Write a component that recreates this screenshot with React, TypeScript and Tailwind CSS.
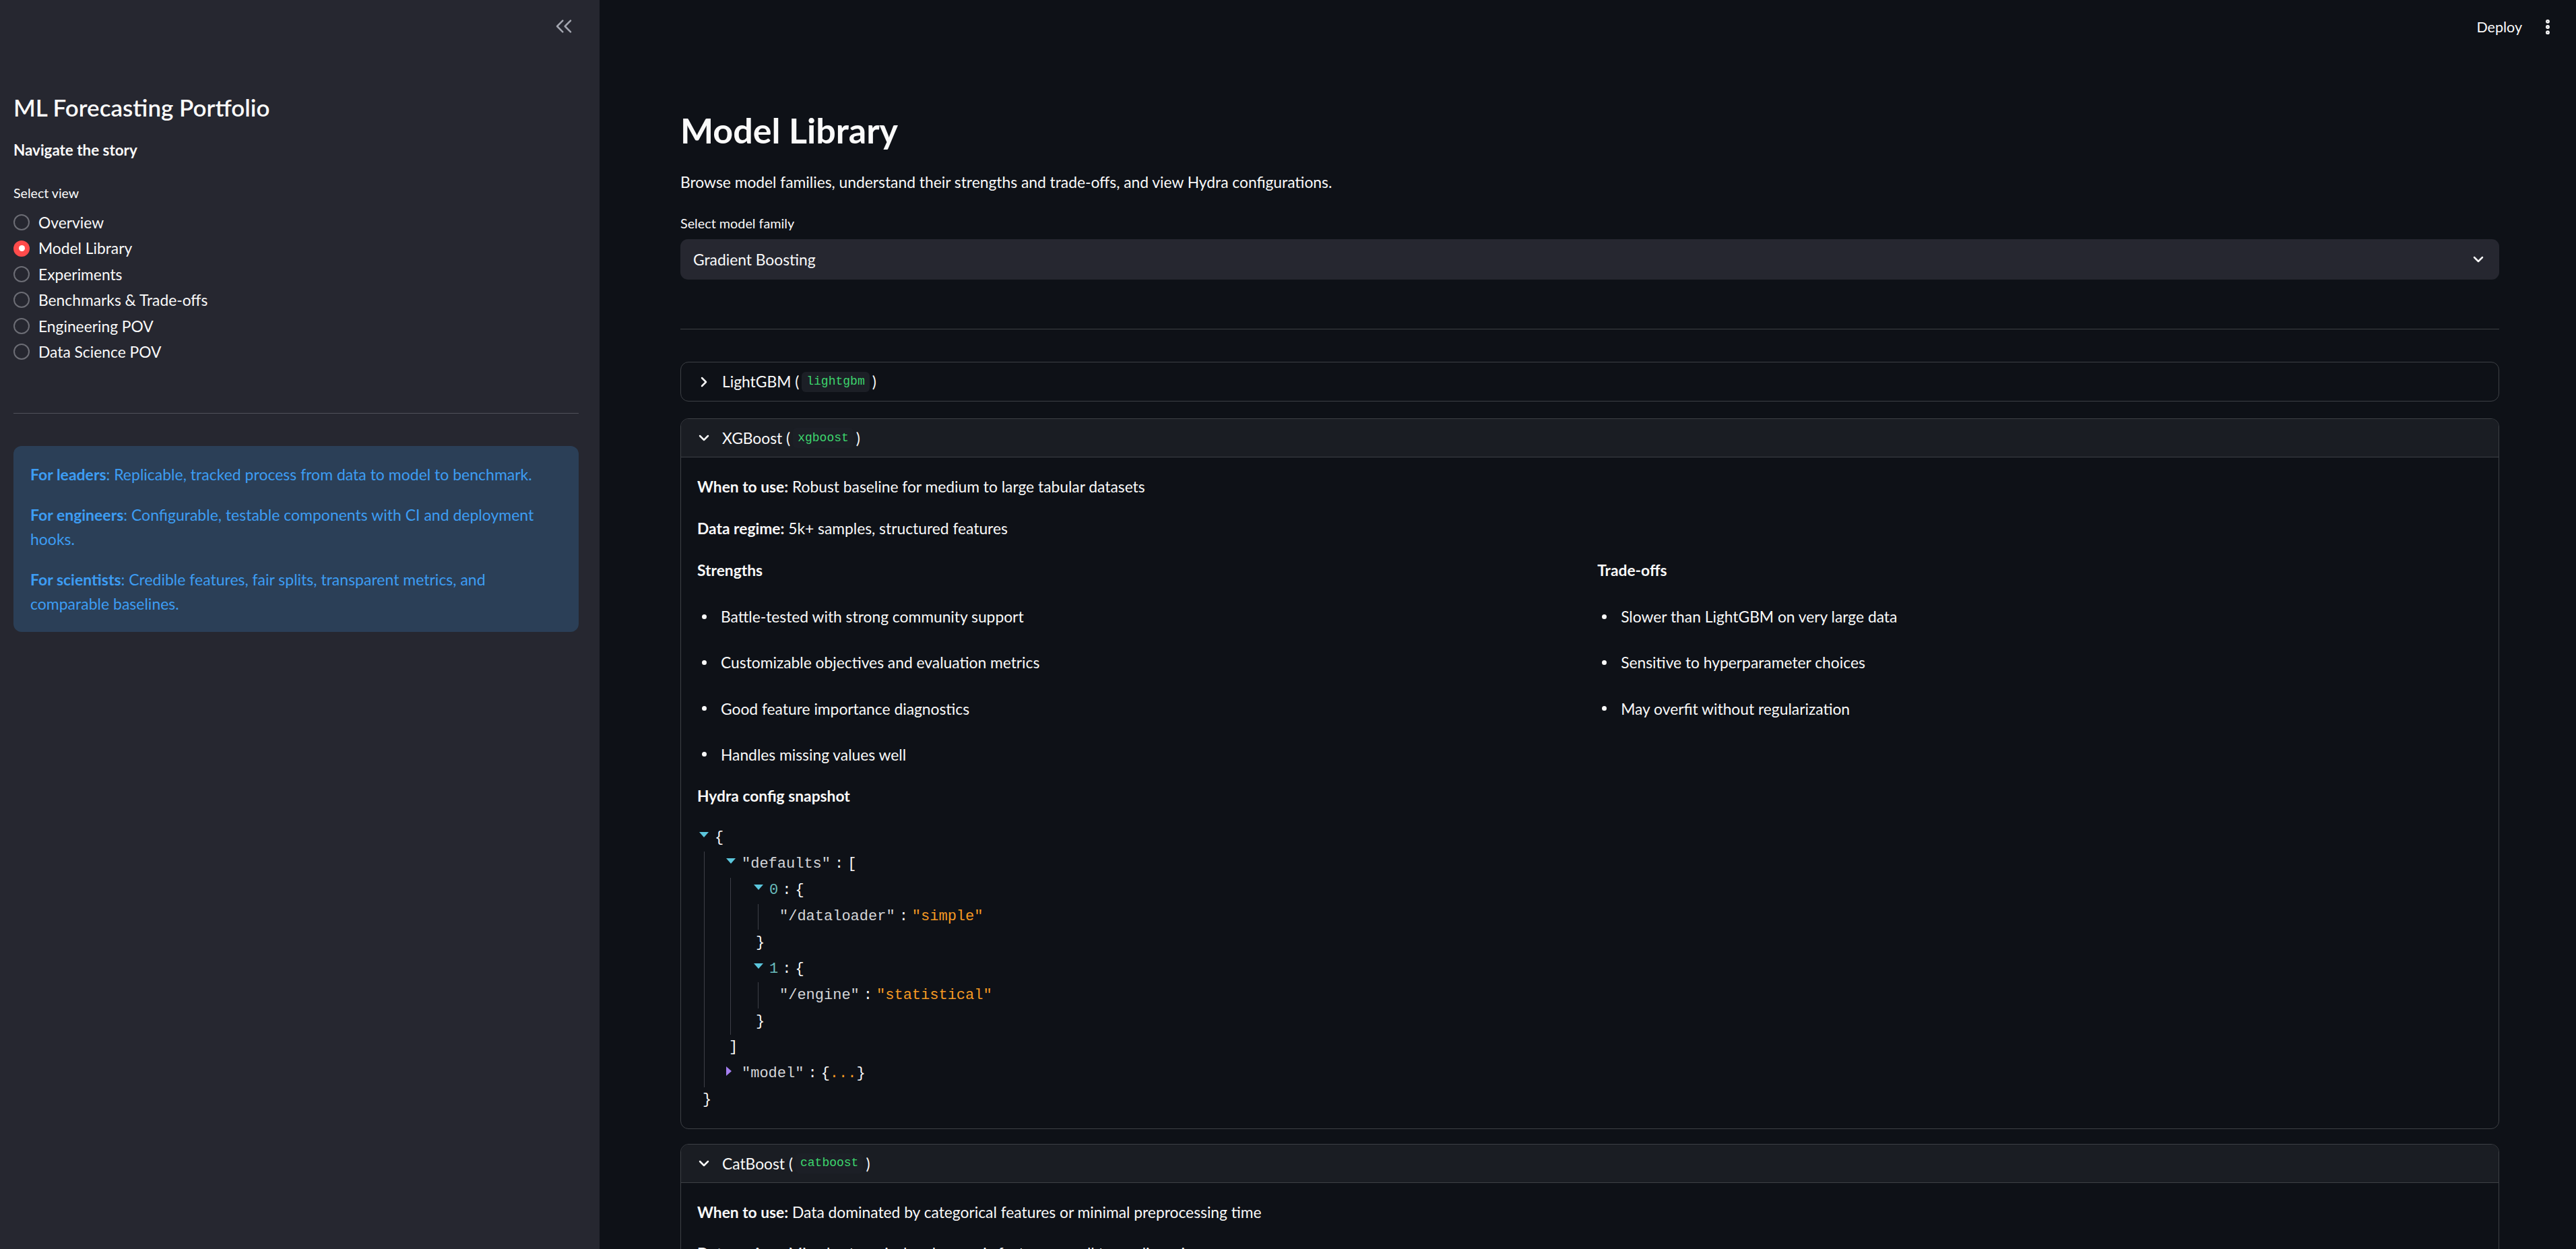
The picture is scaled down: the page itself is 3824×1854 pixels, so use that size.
import { ChevronsLeft, ChevronDown, ChevronRight, EllipsisVertical } from "lucide-react";
import type { ReactNode } from "react";

const views = [
  "Overview",
  "Model Library",
  "Experiments",
  "Benchmarks & Trade-offs",
  "Engineering POV",
  "Data Science POV",
];

const strengths = [
  "Battle-tested with strong community support",
  "Customizable objectives and evaluation metrics",
  "Good feature importance diagnostics",
  "Handles missing values well",
];

const tradeoffs = [
  "Slower than LightGBM on very large data",
  "Sensitive to hyperparameter choices",
  "May overfit without regularization",
];

function Sidebar() {
  return (
    <aside className="w-[890px] shrink-0 h-full bg-[#262730] pl-[20px] pr-[31px] text-[#fafafa]">
      <div className="h-[78px] flex items-center justify-end pr-[2px]">
        <ChevronsLeft size={40} strokeWidth={1.5} className="text-[#a3a6b0]" />
      </div>
      <h1 className="mt-[58px] text-[35px] leading-[47px] font-semibold">ML Forecasting Portfolio</h1>
      <p className="mt-[22px] text-[22.4px] leading-[36px] font-bold">Navigate the story</p>
      <p className="mt-[32px] text-[19.6px] leading-[28px]">Select view</p>

      <div className="mt-[10px]">
        {views.map((v) => (
          <div key={v} className="h-[38.4px] flex items-center">
            {v === "Model Library" ? (
              <span className="w-[24px] h-[24px] rounded-full bg-[#ff4b4b] flex items-center justify-center">
                <span className="w-[9px] h-[9px] rounded-full bg-white" />
              </span>
            ) : (
              <span className="w-[24px] h-[24px] rounded-full border-2 border-[#6c6d75]" />
            )}
            <span className="ml-[13px] text-[22.8px]">{v}</span>
          </div>
        ))}
      </div>

      <div className="mt-[72px] border-t border-[#50515a]" />

      <div className="mt-[48px] rounded-[12px] bg-[#2b3f57] pl-[25px] pr-[28px] py-[24px] text-[23px] leading-[36px] text-[#3d9df3]">
        <p className="mb-[24px]">
          <b>For leaders</b>: Replicable, tracked process from data to model to benchmark.
        </p>
        <p className="mb-[24px]">
          <b>For engineers</b>: Configurable, testable components with CI and deployment hooks.
        </p>
        <p>
          <b>For scientists</b>: Credible features, fair splits, transparent metrics, and comparable baselines.
        </p>
      </div>
    </aside>
  );
}

function Code({ children }: { children: ReactNode }) {
  return (
    <code className="mx-[4px] px-[7px] h-[30px] inline-flex items-center rounded-[6px] bg-[#1c1f26] text-[#3dd56d] text-[18px] font-['Liberation_Mono','DejaVu_Sans_Mono',monospace]">
      {children}
    </code>
  );
}

function Expander({ title, code, open, children }: { title: string; code: string; open?: boolean; children?: ReactNode }) {
  return (
    <div className="rounded-[12px] border border-[#3d4045] overflow-hidden">
      <div className={`h-[57px] flex items-center pl-[22px] text-[22.8px] ${open ? "bg-[#1a1d23] border-b border-[#3d4045]" : ""}`}>
        {open ? <ChevronDown size={24} strokeWidth={2.5} /> : <ChevronRight size={24} strokeWidth={2.5} />}
        <span className="ml-[15px] flex items-center">
          {title} (<Code>{code}</Code>)
        </span>
      </div>
      {open && <div className="px-[24px] pt-[25px]">{children}</div>}
    </div>
  );
}

function Bullets({ items }: { items: string[] }) {
  return (
    <ul className="mt-[33px] flex flex-col gap-[32.3px]">
      {items.map((t) => (
        <li key={t} className="h-[36px] flex items-center">
          <span className="ml-[7px] w-[7px] h-[7px] rounded-full bg-[#fafafa]" />
          <span className="ml-[21px]">{t}</span>
        </li>
      ))}
    </ul>
  );
}

const rowCls = "h-[38.9px] flex items-center whitespace-pre";

function TriDown() {
  return (
    <span className="w-[14px] mr-[9px] mb-[10px] flex">
      <svg width="14" height="8" viewBox="0 0 14 8">
        <polygon points="0,0 14,0 7,8" fill="#5bc6dc" />
      </svg>
    </span>
  );
}

function TriRight() {
  return (
    <span className="w-[14px] mr-[9px] mb-[8px] flex">
      <svg width="8" height="14" viewBox="0 0 8 14">
        <polygon points="0,0 8,7 0,14" fill="#a57ff0" />
      </svg>
    </span>
  );
}

function Colon() {
  return <span className="mx-[6px] text-[#fafafa]">:</span>;
}

function HydraJson() {
  const key = "text-[#d4d5d8]";
  const str = "text-[#f59a23]";
  const idx = "text-[#6bbfbf]";
  return (
    <div className="mt-[26px] pl-[3px] text-[22px] font-['Liberation_Mono','DejaVu_Sans_Mono',monospace] text-[#fafafa]">
      <div className={rowCls}>
        <TriDown />
        <span>{"{"}</span>
      </div>
      <div className="ml-[7px] border-l border-[#3d3f47] pl-[32px]">
        <div className={rowCls}>
          <TriDown />
          <span className={key}>"defaults"</span>
          <Colon />
          <span>[</span>
        </div>
        <div className="ml-[6px] border-l border-[#3d3f47] pl-[34px]">
          {[
            ["0", '"/dataloader"', '"simple"'],
            ["1", '"/engine"', '"statistical"'],
          ].map(([i, k, v]) => (
            <div key={i}>
              <div className={rowCls}>
                <TriDown />
                <span className={idx}>{i}</span>
                <Colon />
                <span>{"{"}</span>
              </div>
              <div className="ml-[6px] border-l border-[#3d3f47] pl-[31px]">
                <div className={rowCls}>
                  <span className={key}>{k}</span>
                  <Colon />
                  <span className={str}>{v}</span>
                </div>
              </div>
              <div className={`${rowCls} pl-[3px]`}>{"}"}</div>
            </div>
          ))}
        </div>
        <div className={`${rowCls} pl-[4px]`}>]</div>
        <div className={rowCls}>
          <TriRight />
          <span className={key}>"model"</span>
          <Colon />
          <span>{"{"}</span>
          <span className={str}>...</span>
          <span>{"}"}</span>
        </div>
      </div>
      <div className={`${rowCls} pl-[5px]`}>{"}"}</div>
    </div>
  );
}

export default function App() {
  return (
    <div className="w-full h-[1854px] flex overflow-hidden bg-[#0e1117] text-[#fafafa] font-[Lato,sans-serif]">
      <Sidebar />
      <main className="relative flex-1 h-full overflow-hidden">
        <div className="absolute top-0 right-0 h-[80px] flex items-center pr-[28px]">
          <span className="text-[21.5px]">Deploy</span>
          <EllipsisVertical size={28} strokeWidth={3} className="ml-[24px]" />
        </div>

        <div className="ml-[120px] w-[2700px] pt-[160px] text-[22.8px]">
          <h1 className="text-[52px] leading-[67px] font-bold">Model Library</h1>
          <p className="mt-[25px] leading-[36px]">
            Browse model families, understand their strengths and trade-offs, and view Hydra configurations.
          </p>
          <p className="mt-[29px] text-[19.8px] leading-[28px]">Select model family</p>
          <div className="mt-[10px] h-[60px] rounded-[11px] bg-[#262730] flex items-center justify-between pl-[19px] pr-[19px]">
            <span>Gradient Boosting</span>
            <ChevronDown size={24} strokeWidth={2.5} />
          </div>

          <div className="mt-[73px] border-t border-[#3d4045]" />

          <div className="mt-[48px]">
            <Expander title="LightGBM" code="lightgbm" />
          </div>

          <div className="mt-[25px]">
            <Expander title="XGBoost" code="xgboost" open>
              <div className="leading-[36px]">
                <p className="mb-[26px]">
                  <b>When to use:</b> Robust baseline for medium to large tabular datasets
                </p>
                <p className="mb-[26px]">
                  <b>Data regime:</b> 5k+ samples, structured features
                </p>
                <div className="grid grid-cols-2 gap-x-[22.4px]">
                  <div>
                    <p className="font-bold">Strengths</p>
                    <Bullets items={strengths} />
                  </div>
                  <div>
                    <p className="font-bold">Trade-offs</p>
                    <Bullets items={tradeoffs} />
                  </div>
                </div>
                <p className="mt-[25px] font-bold">Hydra config snapshot</p>
                <HydraJson />
                <div className="h-[22px]" />
              </div>
            </Expander>
          </div>

          <div className="mt-[22px]">
            <Expander title="CatBoost" code="catboost" open>
              <div className="leading-[36px]">
                <p className="mb-[25px]">
                  <b>When to use:</b> Data dominated by categorical features or minimal preprocessing time
                </p>
                <p className="mb-[25px]">
                  <b>Data regime:</b> Mixed categorical and numeric features, small to medium size
                </p>
              </div>
            </Expander>
          </div>
        </div>
      </main>
    </div>
  );
}
